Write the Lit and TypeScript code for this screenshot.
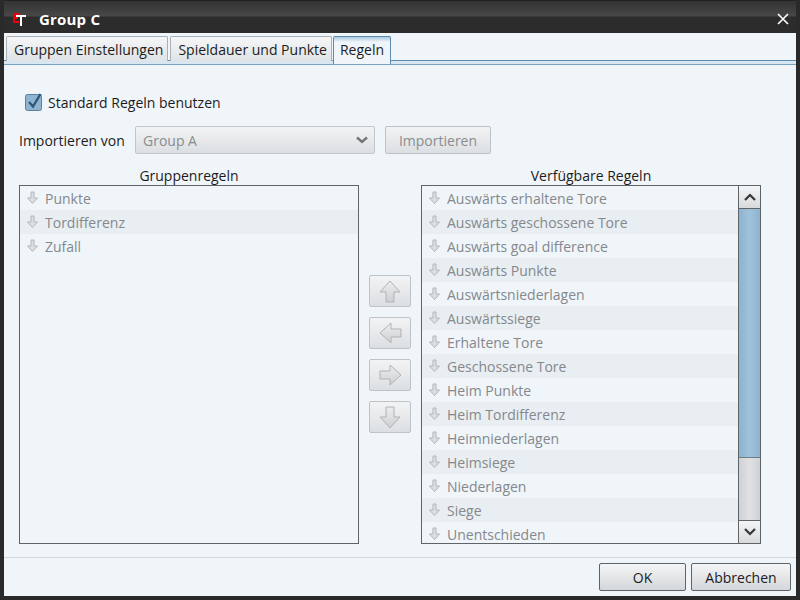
import { LitElement, html, css, svg } from 'lit';
import { customElement, property } from 'lit/decorators.js';

const ARROWS: Record<string, string> = {
  up: 'M11 1 L21 12 L15 12 L15 22 L7 22 L7 12 L1 12 Z',
  left: 'M1 11 L12 1 L12 7 L22 7 L22 15 L12 15 L12 21 Z',
  right: 'M22 11 L11 1 L11 7 L1 7 L1 15 L11 15 L11 21 Z',
  down: 'M11 22 L21 11 L15 11 L15 1 L7 1 L7 11 L1 11 Z',
};

@customElement('rule-list')
export class RuleList extends LitElement {
  @property({ type: Array }) items: string[] = [];
  @property({ type: Boolean }) scroll = false;

  static styles = css`
    :host {
      display: flex;
      height: 359px;
      border: 1px solid #5f6469;
      box-sizing: border-box;
      overflow: hidden;
    }
    .rows {
      flex: 1;
      min-width: 0;
      overflow: hidden;
    }
    .row {
      display: flex;
      align-items: center;
      height: 24px;
      padding-left: 6px;
      gap: 6px;
      color: #85888c;
      font-size: 14px;
      white-space: nowrap;
    }
    .row:nth-child(even) {
      background: #e9eef2;
    }
    .row svg {
      flex: none;
      margin-top: -1px;
    }
    .bar {
      flex: none;
      width: 22px;
      display: flex;
      flex-direction: column;
      border-left: 1px solid #5f6469;
      box-sizing: border-box;
      background: #d6d9dc;
    }
    .end {
      height: 22px;
      flex: none;
      display: flex;
      align-items: center;
      justify-content: center;
      background: linear-gradient(#f4f5f6, #d8dadc);
    }
    .end.up {
      border-bottom: 1px solid #5f6469;
    }
    .end.down {
      border-top: 1px solid #5f6469;
    }
    .thumb {
      height: 248px;
      flex: none;
      background: linear-gradient(90deg, #8db3d0, #a0c2dc 50%, #8db3d0);
      border-bottom: 1px solid #6f7d88;
    }
    .track {
      flex: 1;
      background: linear-gradient(90deg, #cfd2d5, #dfe1e3 50%, #cfd2d5);
    }
  `;

  private rowIcon() {
    return html`<svg width="13" height="14" viewBox="0 0 13 14">
      <path d="M5 1 H8 V7 H11.5 L6.5 12.5 L1.5 7 H5 Z" fill="#dcdfe1" stroke="#b4b7ba" stroke-width="1"></path>
    </svg>`;
  }

  render() {
    return html`
      <div class="rows">
        ${this.items.map((item) => html`<div class="row">${this.rowIcon()}<span>${item}</span></div>`)}
      </div>
      ${this.scroll
        ? html`<div class="bar">
            <div class="end up">
              <svg width="12" height="8" viewBox="0 0 12 8"><path d="M1 7 L6 2 L11 7" fill="none" stroke="#33373b" stroke-width="2.2"></path></svg>
            </div>
            <div class="thumb"></div>
            <div class="track"></div>
            <div class="end down">
              <svg width="12" height="8" viewBox="0 0 12 8"><path d="M1 1 L6 6 L11 1" fill="none" stroke="#33373b" stroke-width="2.2"></path></svg>
            </div>
          </div>`
        : ''}
    `;
  }
}

@customElement('app-root')
export class AppRoot extends LitElement {
  static styles = css`
    :host {
      display: flex;
      flex-direction: column;
      width: 800px;
      height: 600px;
      box-sizing: border-box;
      border: 4px solid #2a2a2a;
      border-top: 0;
      background: #f0f5fa;
      font-family: 'Open Sans', 'Noto Sans', sans-serif;
      font-size: 14px;
      color: #1c1c1c;
      overflow: hidden;
    }
    .title {
      flex: none;
      height: 33px;
      margin: 0 -4px;
      padding: 4px 11px 0 13px;
      display: flex;
      align-items: center;
      box-sizing: border-box;
      background: linear-gradient(#333 0, #484848 15px, #2c2c2c 16px, #2c2c2c 100%);
      border-top: 1px solid #222;
      color: #fff;
      font-weight: 700;
      font-size: 15px;
      letter-spacing: 0.2px;
    }
    .logo {
      width: 14px;
      height: 14px;
      margin-right: 12px;
      flex: none;
    }
    .logo svg {
      display: block;
    }
    .title .name {
      flex: 1;
    }
    .tabs {
      flex: none;
      display: flex;
      gap: 2px;
      height: 25px;
      padding: 3px 0 0 2px;
      border-bottom: 3px solid #d8e6f1;
      box-shadow: 0 1px 0 #7ba3c2, inset 0 -1px 0 #5e8cb0;
      position: relative;
    }
    .tab {
      display: flex;
      align-items: center;
      padding: 0 4px 0 7px;
      box-sizing: border-box;
      height: 25px;
      border: 1px solid #a9b0b6;
      border-bottom: 0;
      border-radius: 2px 2px 0 0;
      background: linear-gradient(#f5f6f7, #dfe3e6);
      white-space: nowrap;
    }
    .tab.on {
      height: 28px;
      margin-left: -1px;
      padding: 0 6px 3px 6px;
      border-color: #5e8cb0;
      background: linear-gradient(#a9c9e0, #f0f5fa 5px);
      position: relative;
      z-index: 1;
    }
    .body {
      flex: 1;
      min-height: 0;
      padding: 27px 15px 0;
    }
    .check {
      display: flex;
      align-items: center;
      gap: 5px;
      height: 22px;
      padding-left: 6px;
    }
    .check svg {
      flex: none;
    }
    .import {
      display: flex;
      align-items: center;
      height: 28px;
      margin-top: 13px;
    }
    .import label {
      width: 116px;
      flex: none;
    }
    .select {
      width: 240px;
      height: 28px;
      box-sizing: border-box;
      display: flex;
      align-items: center;
      justify-content: space-between;
      padding: 0 6px 0 7px;
      border: 1px solid #c3c7cb;
      border-radius: 2px;
      background: linear-gradient(#f2f3f4, #dcdfe2);
      color: #8a8d90;
    }
    .btn {
      box-sizing: border-box;
      display: flex;
      align-items: center;
      justify-content: center;
      border: 1px solid #bfc3c7;
      border-radius: 2px;
      background: linear-gradient(#f2f3f4, #dcdfe2);
      color: #8a8d90;
      font-family: inherit;
      font-size: 14px;
      padding: 0;
    }
    .btn.import-btn {
      width: 106px;
      height: 28px;
      margin-left: 10px;
    }
    .lists {
      display: flex;
      margin-top: 12px;
    }
    .col {
      width: 340px;
      flex: none;
    }
    .col h2 {
      margin: 0;
      height: 19px;
      font-weight: 400;
      font-size: 14px;
      line-height: 19px;
      text-align: center;
    }
    .mid {
      width: 62px;
      flex: none;
      display: flex;
      flex-direction: column;
      align-items: center;
      gap: 10px;
      padding-top: 109px;
    }
    .mid .btn {
      width: 42px;
      height: 32px;
    }
    .footer {
      flex: none;
      height: 33px;
      border-top: 1px solid #d2d7dc;
      display: flex;
      justify-content: flex-end;
      gap: 5px;
      padding: 5px 5px 0 0;
    }
    .footer .btn {
      height: 28px;
      border: 1px solid #5f6469;
      color: #1c1c1c;
      background: linear-gradient(#f4f5f6, #d4d7da);
    }
    .ok {
      width: 87px;
    }
    .cancel {
      width: 100px;
    }
  `;

  private groupRules = ['Punkte', 'Tordifferenz', 'Zufall'];
  private available = [
    'Auswärts erhaltene Tore',
    'Auswärts geschossene Tore',
    'Auswärts goal difference',
    'Auswärts Punkte',
    'Auswärtsniederlagen',
    'Auswärtssiege',
    'Erhaltene Tore',
    'Geschossene Tore',
    'Heim Punkte',
    'Heim Tordifferenz',
    'Heimniederlagen',
    'Heimsiege',
    'Niederlagen',
    'Siege',
    'Unentschieden',
  ];

  private arrow(dir: string) {
    return html`<button class="btn">
      <svg width="23" height="23" viewBox="0 0 23 23">
        ${svg`<defs><linearGradient id="g-${dir}" x1="0" y1="0" x2="0" y2="1">
          <stop offset="0" stop-color="#eceeef"></stop>
          <stop offset="1" stop-color="#ccced1"></stop>
        </linearGradient></defs>
        <path d=${ARROWS[dir]} fill="url(#g-${dir})" stroke="#b0b3b6" stroke-width="1"></path>`}
      </svg>
    </button>`;
  }

  render() {
    return html`
      <div class="title">
        <div class="logo">
          <svg width="14" height="14" viewBox="0 0 14 14">
            <path d="M3 3 H13 V5 H9 V14 H7 V5 H3 Z" fill="#fff"></path>
            <path d="M0 1 H6 V3 H2 V5 H5 V7 H2 V9 H6 V11 H0 Z" fill="#e8000a"></path>
          </svg>
        </div>
        <span class="name">Group C</span>
        <svg width="12" height="12" viewBox="0 0 12 12">
          <path d="M1 1 L11 11 M11 1 L1 11" stroke="#fff" stroke-width="1.6"></path>
        </svg>
      </div>
      <div class="tabs">
        <div class="tab">Gruppen Einstellungen</div>
        <div class="tab">Spieldauer und Punkte</div>
        <div class="tab on">Regeln</div>
      </div>
      <div class="body">
        <div class="check">
          <svg width="18" height="20" viewBox="0 0 18 20">
            <rect x="0.5" y="2.5" width="16" height="16" rx="2" fill="#8fb4d2" stroke="#5c7f9c"></rect>
            <path d="M4 10 L8 14.5 L15.5 2" fill="none" stroke="#2f5878" stroke-width="2.4"></path>
          </svg>
          <span>Standard Regeln benutzen</span>
        </div>
        <div class="import">
          <label>Importieren von</label>
          <div class="select">
            <span>Group A</span>
            <svg width="12" height="8" viewBox="0 0 12 8"><path d="M1 1.5 L6 6 L11 1.5" fill="none" stroke="#70757a" stroke-width="2.4"></path></svg>
          </div>
          <button class="btn import-btn">Importieren</button>
        </div>
        <div class="lists">
          <div class="col">
            <h2>Gruppenregeln</h2>
            <rule-list .items=${this.groupRules}></rule-list>
          </div>
          <div class="mid">
            ${this.arrow('up')}${this.arrow('left')}${this.arrow('right')}${this.arrow('down')}
          </div>
          <div class="col">
            <h2>Verfügbare Regeln</h2>
            <rule-list .items=${this.available} scroll></rule-list>
          </div>
        </div>
      </div>
      <div class="footer">
        <button class="btn ok">OK</button>
        <button class="btn cancel">Abbrechen</button>
      </div>
    `;
  }
}
